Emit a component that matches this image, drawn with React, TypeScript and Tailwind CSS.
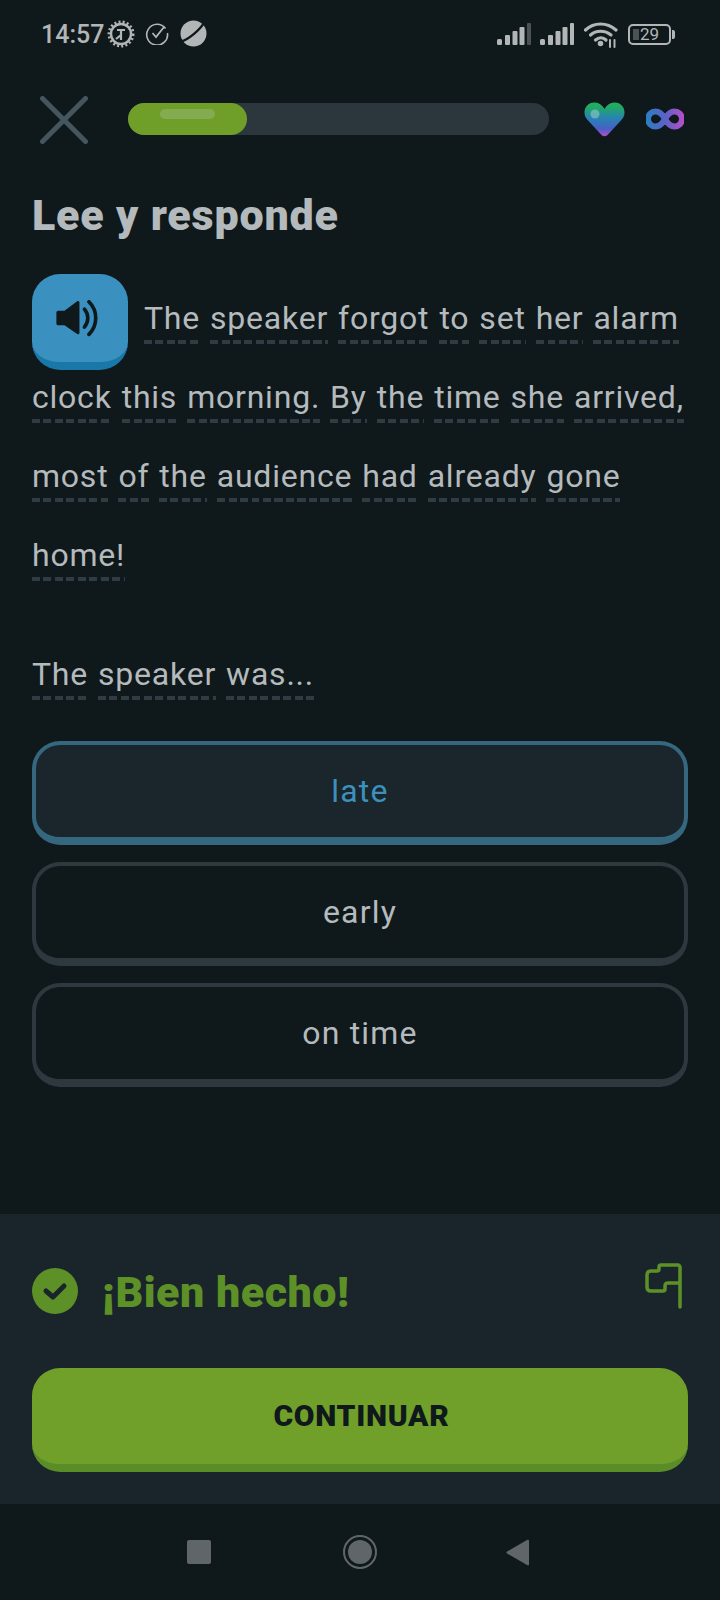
import React from "react";

const Dash = () => (
  <div className="mt-[6px] h-[4px] w-full bg-[repeating-linear-gradient(90deg,#2f3c43_0,#2f3c43_8px,transparent_8px,transparent_11.500px)]" />
);

const Word = ({ w }: { w: string }) => (
  <span className="inline-block">
    <span className="block h-[32px] leading-[32px] whitespace-nowrap">{w}</span>
    <Dash />
  </span>
);

const Line = ({ words, className }: { words: string[]; className?: string }) => (
  <div className={"flex gap-[10px] " + (className ?? "")}>
    {words.map((w, i) => (
      <Word key={i} w={w} />
    ))}
  </div>
);

const Signal = ({ dim }: { dim?: boolean }) => (
  <svg width="35" height="24" viewBox="0 0 35 24">
    <rect x="0" y="17" width="5" height="6" rx="1.500" fill="#b3b6b7" />
    <rect x="8" y="13" width="5" height="10" rx="1" fill="#b3b6b7" />
    <rect x="15.500" y="9" width="5" height="14" rx="1" fill="#b3b6b7" />
    <rect x="22.500" y="5" width="5" height="18" rx="1" fill="#b3b6b7" />
    <rect x="30" y="1" width="4" height="22" rx="1" fill={dim ? "#4c5254" : "#b3b6b7"} />
  </svg>
);

const Gear = () => (
  <svg width="28" height="28" viewBox="0 0 28 28" fill="none" stroke="#b3b6b7">
    <circle cx="14" cy="14" r="10" strokeWidth="2.400" />
    <circle cx="14" cy="14" r="12.200" strokeWidth="2.600" strokeDasharray="2 2.200" />
    <path d="M10 10h8M14 10v5M14 15l-5 4M14 15v5" strokeWidth="2.200" />
  </svg>
);

const Option = ({ label, selected }: { label: string; selected?: boolean }) => (
  <div
    className={
      "flex h-[104px] items-center justify-center rounded-[28px] border-4 border-b-8 text-[32px] " +
      (selected
        ? "border-[#35677f] bg-[#1a252c] text-[#3c91bc]"
        : "border-[#2e393f] text-[#b5babd]")
    }
  >
    <span className="tracking-[1.200px]">{label}</span>
  </div>
);

export default function App() {
  return (
    <div className="flex h-[1600px] w-[720px] flex-col overflow-hidden bg-[#0f181b] font-['Roboto',sans-serif]">
      {/* status bar */}
      <div className="flex h-[68px] items-center pl-[41px] pr-[45px]">
        <span className="text-[25px] font-medium leading-none text-[#b3b6b7]">14:57</span>
        <div className="ml-[3px]">
          <Gear />
        </div>
        <svg className="ml-[10px] mb-[3px]" width="24" height="24" viewBox="0 0 24 24" fill="none" stroke="#b3b6b7" strokeWidth="1.600">
          <path d="M20.500 7.500A10.400 10.400 0 1 0 22.400 12" />
          <path d="M7.500 12l3.500 4 8-10" strokeWidth="1.800" />
        </svg>
        <svg className="ml-[11px] mb-[2px]" width="27" height="27" viewBox="0 0 27 27">
          <circle cx="13.500" cy="13.500" r="13" fill="#b3b6b7" />
          <path d="M1 21.500C8 20 20 10 24.500 2" stroke="#0f181b" strokeWidth="2.400" fill="none" />
        </svg>
        <div className="ml-auto flex items-center">
          <Signal dim />
          <div className="ml-[8px]">
            <Signal />
          </div>
          <svg className="ml-[9px]" width="34" height="27" viewBox="0 0 34 27" fill="none" stroke="#b3b6b7" strokeWidth="3.200" strokeLinecap="round">
            <path d="M1.500 9C10 1 23 1 32 9" />
            <path d="M6.500 14C12 9 21 9 27 14" />
            <path d="M11.500 19C15 16 19 16 22 19" />
            <circle cx="16.500" cy="22.500" r="1.200" fill="#b3b6b7" />
            <path d="M26 19v7M30.500 19v7" strokeWidth="2" />
          </svg>
          <div className="relative ml-[10px] flex h-[21px] w-[43px] items-center justify-center rounded-[5px] border-2 border-[#b3b6b7]">
            <div className="absolute left-[3px] top-[3px] h-[11px] w-[6px] bg-[#4c5254]" />
            <span className="relative text-[17px] leading-none text-[#b3b6b7]">29</span>
          </div>
          <div className="ml-[1px] h-[9px] w-[3px] rounded-r-[2px] bg-[#b3b6b7]" />
        </div>
      </div>

      {/* top row */}
      <div className="mt-[28px] flex h-[48px] items-center pl-[40px]">
        <svg width="48" height="48" viewBox="0 0 48 48" stroke="#45565f" strokeWidth="5" strokeLinecap="round">
          <path d="M2.500 2.500l43 43M45.500 2.500l-43 43" />
        </svg>
        <div className="mb-[2px] ml-[40px] h-[32px] w-[421px] rounded-full bg-[#2c373d]">
          <div className="flex h-[32px] w-[119px] justify-center rounded-full bg-[#6f9f29] pt-[6px]">
            <div className="h-[10px] w-[55px] rounded-full bg-[#85ab50]" />
          </div>
        </div>
        <svg className="ml-[35px] mb-[2px]" width="41" height="35" viewBox="0 0 41 35">
          <defs>
            <linearGradient id="hg" x1="0" y1="0" x2="0" y2="1">
              <stop offset="0.08" stopColor="#1faf5d" />
              <stop offset="0.5" stopColor="#2a7fb8" />
              <stop offset="0.78" stopColor="#4a5fc4" />
              <stop offset="1" stopColor="#b04fc8" />
            </linearGradient>
          </defs>
          <path
            d="M20.500 7C17.500 1.500 13 .5 10 .5 4.500.5.5 5 .5 10.500c0 3.500 1.500 6 4 8.500l13 14c1.700 1.800 4.300 1.800 6 0l13-14c2.500-2.500 4-5 4-8.500C40.500 5 36.500.5 31 .5c-3 0-7.500 1-10.500 6.500z"
            fill="url(#hg)"
          />
          <circle cx="11" cy="12" r="4.500" fill="#ffffff" fillOpacity="0.3" />
        </svg>
        <svg className="ml-[21px] mb-[2px]" width="38" height="22" viewBox="0 0 38 22" fill="none">
          <defs>
            <linearGradient id="ig" x1="0" y1="0" x2="38" y2="0" gradientUnits="userSpaceOnUse">
              <stop offset="0" stopColor="#2a7fc0" />
              <stop offset="0.5" stopColor="#5a62c8" />
              <stop offset="1" stopColor="#b84fc8" />
            </linearGradient>
          </defs>
          <path
            d="M19 11C16 5.500 13 3.500 9.500 3.500a7.500 7.500 0 0 0 0 15c3.500 0 6.500-2 9.500-7.500s6-7.500 9.500-7.500a7.500 7.500 0 0 1 0 15c-3.500 0-6.500-2-9.500-7.500z"
            stroke="url(#ig)"
            strokeWidth="6"
          />
        </svg>
      </div>

      {/* title */}
      <h1 className="mt-[49px] h-[44px] pl-[32px] text-[43px] font-black leading-[44px] tracking-[0.800px] text-[#b4b9bc]">Lee y responde</h1>

      {/* passage */}
      <div className="mt-[37px] px-[32px] text-[32px] tracking-[0.780px] text-[#b5babd]">
        <div className="flex h-[96px] items-end">
          <div className="relative h-[96px] w-[96px] shrink-0 rounded-[28px] border-b-8 border-[#1a78a8] bg-[#3a90bf]">
            <svg className="absolute left-[24px] top-[26px]" width="46" height="38" viewBox="0 0 50 42" fill="#0f181b">
              <path d="M2 12h7L23 1.500c1.500-1 2.500 0 2.500 1.500v33c0 1.500-1 2.500-2.500 1.500L9 28H2c-1 0-2-1-2-2V14c0-1 1-2 2-2z" />
              <path d="M31 10c5 6 5 14 0 20" fill="none" stroke="#0f181b" strokeWidth="4" strokeLinecap="round" />
              <path d="M36 2c10 10 10 26 0 36" fill="none" stroke="#0f181b" strokeWidth="4" strokeLinecap="round" />
            </svg>
          </div>
          <Line className="mb-[26px] ml-[16px]" words={["The", "speaker", "forgot", "to", "set", "her", "alarm"]} />
        </div>
        <Line className="mt-[11px]" words={["clock", "this", "morning.", "By", "the", "time", "she", "arrived,"]} />
        <Line className="mt-[37px]" words={["most", "of", "the", "audience", "had", "already", "gone"]} />
        <Line className="mt-[37px]" words={["home!"]} />
        <Line className="mt-[77px]" words={["The", "speaker", "was..."]} />
      </div>

      {/* options */}
      <div className="mt-[41px] flex flex-col gap-[17px] px-[32px]">
        <Option label="late" selected />
        <Option label="early" />
        <Option label="on time" />
      </div>

      <div className="flex-1" />

      {/* footer */}
      <div className="h-[290px] bg-[#1a252b] px-[32px] pt-[54px]">
        <div className="flex h-[46px] items-center">
          <svg width="46" height="46" viewBox="0 0 46 46">
            <circle cx="23" cy="23" r="23" fill="#5d9128" />
            <path d="M14 23l7 6 11-11" fill="none" stroke="#1a252b" strokeWidth="5" strokeLinecap="round" strokeLinejoin="round" />
          </svg>
          <span className="ml-[24px] mt-[3px] text-[43px] font-black leading-none tracking-[0.500px] text-[#5d9128]">¡Bien hecho!</span>
          <svg className="ml-auto mb-[10px] mr-[6px]" width="37" height="46" viewBox="0 0 37 46" fill="none" stroke="#5d9128" strokeWidth="3.500" strokeLinecap="round" strokeLinejoin="round">
            <path d="M35 44V4c0-1-1-2-2-2H16c-1.500 0-2 .5-2 2v2c0 1-.5 2-2 2H6C3 8 2 9.500 2 12v12c0 2.500 1 4 4 4h12c1.500 0 2-.5 2-2v-3c0-2 1-3 3-3h12" />
          </svg>
        </div>
        <div className="mt-[54px] flex h-[104px] items-center justify-center rounded-[28px] border-b-8 border-[#5a8d27] bg-[#70a029]">
          <span className="pl-[3px] text-[30px] font-black leading-none tracking-[0.700px] text-[#0f181b]">CONTINUAR</span>
        </div>
      </div>

      {/* nav */}
      <div className="flex h-[96px] items-center bg-[#0f181b] pl-[187px]">
        <div className="h-[24px] w-[24px] rounded-[2px] bg-[#5f6569]" />
        <svg className="ml-[132px]" width="34" height="34" viewBox="0 0 34 34">
          <circle cx="17" cy="17" r="16" fill="none" stroke="#5f6569" strokeWidth="2" />
          <circle cx="17" cy="17" r="12" fill="#5f6569" />
        </svg>
        <svg className="ml-[129px]" width="24" height="27" viewBox="0 0 24 27">
          <path d="M23 1.500v24c0 1-1 1-2 .5L1 14.500c-.8-.5-.8-1.500 0-2L21 1c1-.5 2-.5 2 .5z" fill="#5f6569" />
        </svg>
      </div>
    </div>
  );
}
